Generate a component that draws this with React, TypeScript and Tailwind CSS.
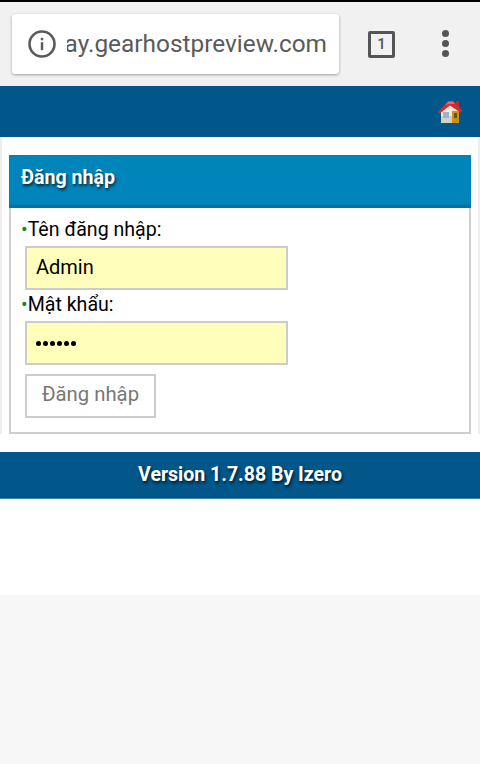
export default function App() {
  return (
    <div className="w-[480px] h-[764px] bg-[#f7f7f7] flex flex-col overflow-hidden font-['Roboto',sans-serif] text-black">
      <div className="h-[2px] bg-black" />
      <div className="h-[84px] bg-[#f1f1f1] flex items-center pl-3">
        <div className="w-[327px] h-[60px] mt-[-1px] bg-white rounded-[3px] shadow-[0_1px_3px_rgba(0,0,0,0.35)] flex items-center pl-[16px] overflow-hidden">
          <svg width="28" height="28" viewBox="0 0 28 28" fill="none" className="shrink-0">
            <circle cx="14" cy="14" r="12.5" stroke="#5a5a5a" strokeWidth="2.6" />
            <rect x="12.8" y="12.2" width="2.4" height="8" fill="#5a5a5a" />
            <rect x="12.8" y="7.8" width="2.4" height="2.5" fill="#5a5a5a" />
          </svg>
          <div className="ml-[11px] w-[260px] overflow-hidden whitespace-nowrap text-[24.4px] leading-[28px] text-[#5a5a5a] flex justify-end">
            ay.gearhostpreview.com
          </div>
        </div>
        <div className="ml-[29px] w-[27px] h-[27px] border-[3px] border-[#555] rounded-[2px] flex items-center justify-center text-[15px] font-medium text-[#555]">1</div>
        <div className="ml-[47px] mt-[-2px] flex flex-col gap-[3px]">
          <div className="w-[7px] h-[7px] rounded-full bg-[#555]" />
          <div className="w-[7px] h-[7px] rounded-full bg-[#555]" />
          <div className="w-[7px] h-[7px] rounded-full bg-[#555]" />
        </div>
      </div>
      <div className="h-[51px] bg-[#01568a] flex items-center justify-end pr-[18px]">
        <svg width="24" height="24" viewBox="0 0 24 24" className="mt-[1px]">
          <rect x="18" y="1" width="3" height="6" fill="#c62828" />
          <path d="M3 10 L12 3 L21 10 V23 H3 Z" fill="#f3ecd8" />
          <path d="M3 16 H21 V23 H3 Z" fill="#d8d0bb" />
          <path d="M0 12 L10 1 L15 1 L24 10 L23 13 L12 5.5 L1.5 13.5 Z" fill="#d92a2e" />
          <path d="M7 5 L10.5 1.5 L15 1.5 L17 4 L11 4 Z" fill="#f0656a" />
          <rect x="5" y="12" width="6" height="6" fill="#9fb0d4" />
          <rect x="14" y="11" width="7" height="12" fill="#c9921c" />
          <rect x="16" y="13" width="3" height="5" fill="#6e5212" />
        </svg>
      </div>
      <div className="h-[458px] bg-white flex flex-col">
        <div className="pt-[18px] px-[7px] border-x-2 border-[#eeeeee]">
          <div className="h-[53px] bg-[#0085bb] border-b-[3px] border-[#0a6f9e] flex items-center pl-[12px] pb-[5px]">
            <span className="text-[19.6px] font-bold text-white [text-shadow:1px_2px_3px_rgba(0,0,0,0.75)]">Đăng nhập</span>
          </div>
          <div className="h-[226px] border-2 border-t-0 border-[#cfcfcf] pl-[10px] pt-[7px]">
            <div className="text-[19.6px] leading-[30px] h-[30px] whitespace-nowrap"><span className="text-[#0a8a2a]">•</span>Tên đăng nhập:</div>
            <div className="ml-[4px] mt-[1px] w-[263px] h-[44px] bg-[#ffffbb] border-2 border-[#cccccc] flex items-center pl-[9px] pb-[2px] text-[20px]">Admin</div>
            <div className="text-[19.6px] leading-[30px] h-[30px] whitespace-nowrap"><span className="text-[#0a8a2a]">•</span>Mật khẩu:</div>
            <div className="ml-[4px] mt-[1px] w-[263px] h-[44px] bg-[#ffffbb] border-2 border-[#cccccc] flex items-center pl-[9px] gap-[2px]">
              <i className="w-[5px] h-[5px] rounded-full bg-black" /><i className="w-[5px] h-[5px] rounded-full bg-black" /><i className="w-[5px] h-[5px] rounded-full bg-black" /><i className="w-[5px] h-[5px] rounded-full bg-black" /><i className="w-[5px] h-[5px] rounded-full bg-black" /><i className="w-[5px] h-[5px] rounded-full bg-black" />
            </div>
            <div className="ml-[4px] mt-[9px] w-[131px] h-[44px] border-2 border-[#cccccc] flex items-center justify-center pb-[4px] text-[20.3px] text-[#777]">Đăng nhập</div>
          </div>
        </div>
        <div className="mt-[18px] h-[47px] bg-[#01568a] border-b border-[#3d83ad] flex items-center justify-center text-[19.5px] font-bold text-white [text-shadow:1px_2px_3px_rgba(0,0,0,0.75)]">
          Version 1.7.88 By Izero
        </div>
      </div>
    </div>
  );
}
